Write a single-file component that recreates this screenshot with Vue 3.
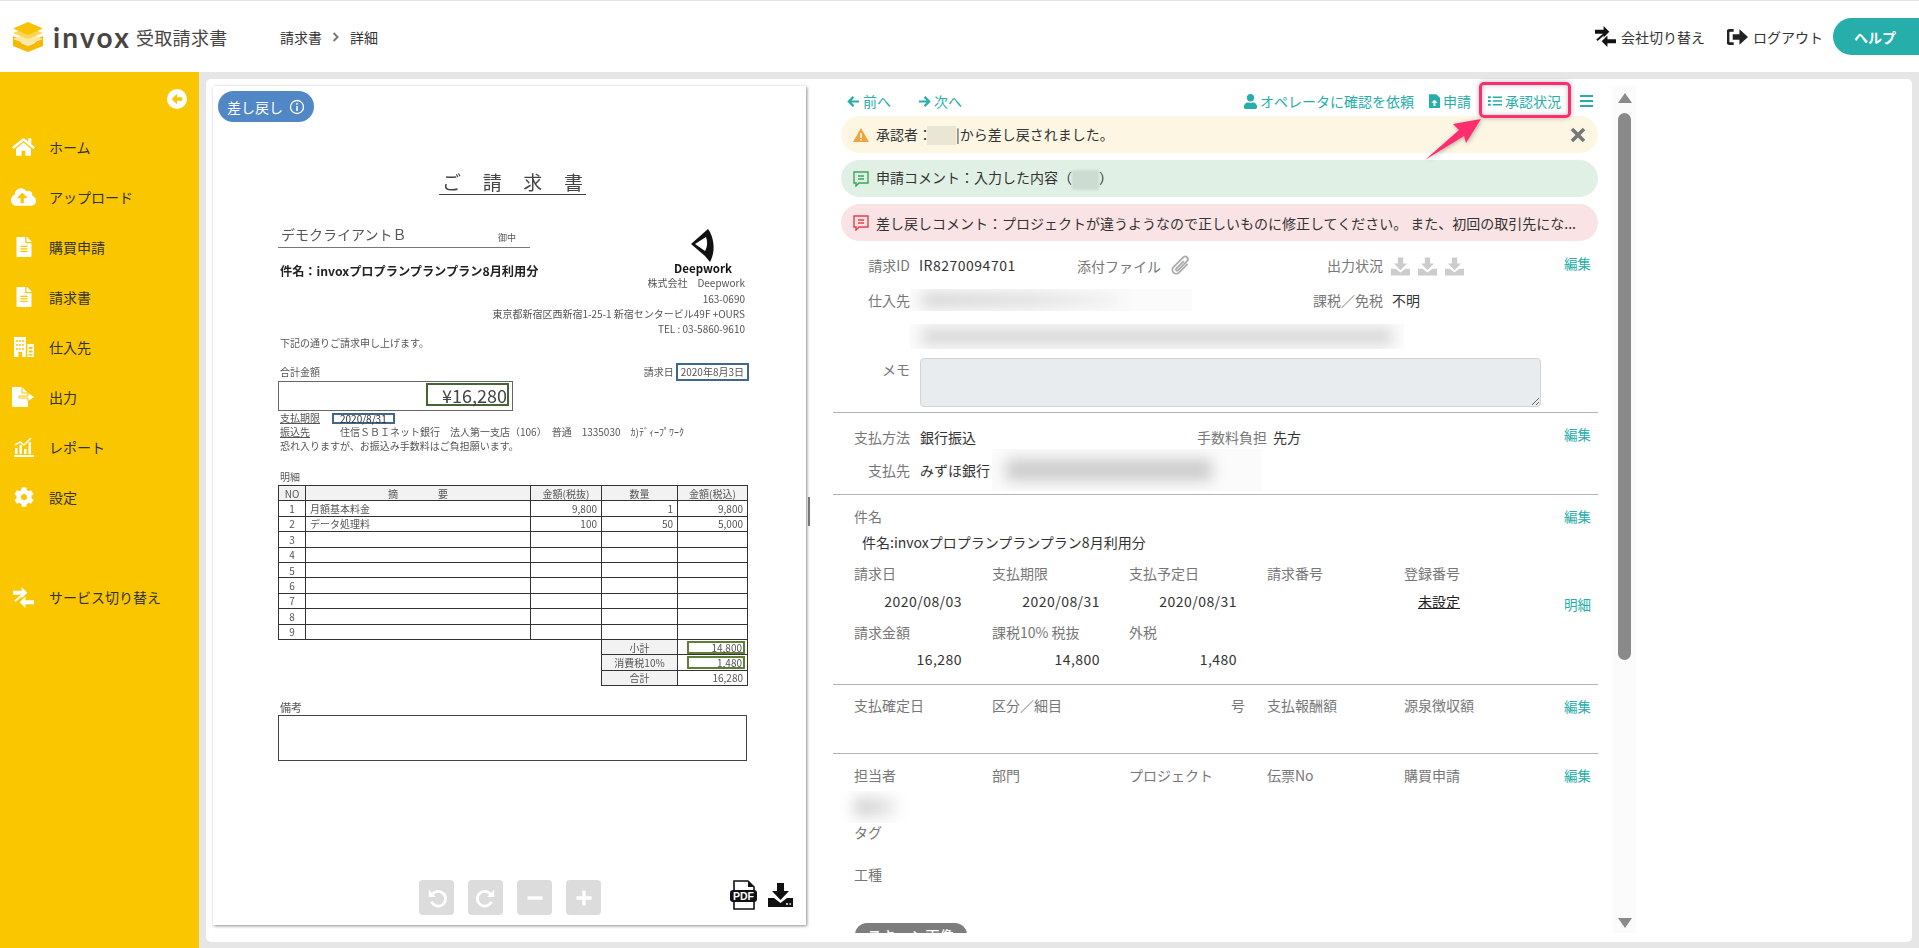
<script setup>
const tableRows = [
  { no: 1, name: '月額基本料金', price: '9,800', qty: '1', total: '9,800' },
  { no: 2, name: 'データ処理料', price: '100', qty: '50', total: '5,000' },
  { no: 3 }, { no: 4 }, { no: 5 }, { no: 6 }, { no: 7 }, { no: 8 }, { no: 9 }
]
const dateLabels = ['請求日', '支払期限', '支払予定日', '請求番号', '登録番号']
const dateValues = ['2020/08/03', '2020/08/31', '2020/08/31']
const amountLabels = ['請求金額', '課税10% 税抜', '外税']
const amountValues = ['16,280', '14,800', '1,480']
const payLabels = ['支払確定日', '区分／細目', '号', '支払報酬額', '源泉徴収額']
const staffLabels = ['担当者', '部門', 'プロジェクト', '伝票No', '購買申請']
</script>

<template>
  <div class="page">
    <header class="header">
      <div class="brand">
        <svg class="logo" viewBox="0 0 30 30" width="30" height="30">
          <polygon points="0,14 0,24 15,30 30,24 30,14 22,17.5 22,21 15,24 8,21 8,17.5" fill="#f7b900" />
          <polygon points="15,11 30,17 15,23 0,17" fill="#fde9a0" />
          <polygon points="15,5 30,11 15,17 0,11" fill="#fbd555" />
          <polygon points="15,0 30,6.5 15,13 0,6.5" fill="#f9c300" />
        </svg>
        <span class="brand-en">invox</span>
        <span class="brand-ja">受取請求書</span>
      </div>
      <div class="crumbs">
        <span>請求書</span>
        <svg viewBox="0 0 10 12" width="8" height="10"><path d="M2 1l5 5-5 5" fill="none" stroke="#777" stroke-width="2.4" /></svg>
        <span>詳細</span>
      </div>
      <div class="head-right">
        <a class="head-link">
          <svg viewBox="0 0 22 22" width="21" height="21"><path d="M0 4h9V0l6 6-6 6V8H0zM22 14h-9v-4l-6 6 6 6v-4h9z" fill="#111" /><path d="M2 15l8-7" stroke="#111" stroke-width="2" /></svg>
          会社切り替え
        </a>
        <a class="head-link logout">
          <svg viewBox="0 0 22 18" width="21" height="18"><path d="M7 2H3a2 2 0 0 0-2 2v10a2 2 0 0 0 2 2h4" fill="none" stroke="#222" stroke-width="3" /><path d="M6 6h7V1l9 8-9 8v-5H6z" fill="#222" /></svg>
          ログアウト
        </a>
        <button class="help">ヘルプ</button>
      </div>
    </header>

    <div class="main">
      <aside class="sidebar">
        <div class="toggle-wrap">
          <span class="toggle">
            <svg viewBox="0 0 16 16" width="14" height="14"><path d="M8 2L2 8l6 6v-4h6V6H8z" fill="#fac600" /></svg>
          </span>
        </div>
        <nav class="nav">
          <a class="nav-item">
            <span class="nav-icon"><svg viewBox="0 0 576 512" width="23" height="20"><path fill="#fff" d="M280.37 148.26L96 300.11V464a16 16 0 0 0 16 16l112.06-.29a16 16 0 0 0 15.92-16V368a16 16 0 0 1 16-16h64a16 16 0 0 1 16 16v95.64a16 16 0 0 0 16 16.05L464 480a16 16 0 0 0 16-16V300L295.67 148.26a12.19 12.19 0 0 0-15.3 0zM571.6 251.47L488 182.56V44.05a12 12 0 0 0-12-12h-56a12 12 0 0 0-12 12v72.61L318.47 43a48 48 0 0 0-61 0L4.34 251.47a12 12 0 0 0-1.6 16.9l25.5 31A12 12 0 0 0 45.15 301l235.22-193.74a12.19 12.19 0 0 1 15.3 0L530.9 301a12 12 0 0 0 16.9-1.6l25.5-31a12 12 0 0 0-1.7-16.93z" /></svg></span>
            ホーム
          </a>
          <a class="nav-item">
            <span class="nav-icon"><svg viewBox="0 0 640 512" width="25" height="20"><path fill="#fff" d="M537.6 226.6c4.1-10.7 6.4-22.4 6.4-34.6 0-53-43-96-96-96-19.7 0-38.1 6-53.3 16.2C367 64.2 315.3 32 256 32c-88.4 0-160 71.6-160 160 0 2.7.1 5.4.2 8.1C40.2 219.8 0 273.2 0 336c0 79.5 64.5 144 144 144h368c70.7 0 128-57.3 128-128 0-61.9-44-113.6-102.4-125.4zM393.4 288H328v112c0 8.8-7.2 16-16 16h-48c-8.8 0-16-7.2-16-16V288h-65.4c-14.3 0-21.4-17.2-11.3-27.3l105.4-105.4c6.2-6.2 16.4-6.2 22.6 0l105.4 105.4c10.1 10.1 2.9 27.3-11.3 27.3z" /></svg></span>
            アップロード
          </a>
          <a class="nav-item">
            <span class="nav-icon"><svg viewBox="0 0 384 512" width="16" height="20"><path fill="#fff" d="M224 136V0H24C10.7 0 0 10.7 0 24v464c0 13.3 10.7 24 24 24h336c13.3 0 24-10.7 24-24V160H248c-13.2 0-24-10.8-24-24zm64 236c0 6.6-5.4 12-12 12H108c-6.6 0-12-5.4-12-12v-8c0-6.6 5.4-12 12-12h168c6.6 0 12 5.4 12 12v8zm0-64c0 6.6-5.4 12-12 12H108c-6.6 0-12-5.4-12-12v-8c0-6.6 5.4-12 12-12h168c6.6 0 12 5.4 12 12v8zm0-72v8c0 6.6-5.4 12-12 12H108c-6.6 0-12-5.4-12-12v-8c0-6.6 5.4-12 12-12h168c6.6 0 12 5.4 12 12zm96-114.1v6.1H256V0h6.1c6.4 0 12.5 2.5 17 7l97.9 98c4.5 4.5 7 10.6 7 16.9z" /></svg></span>
            購買申請
          </a>
          <a class="nav-item">
            <span class="nav-icon"><svg viewBox="0 0 384 512" width="16" height="20"><path fill="#fff" d="M224 136V0H24C10.7 0 0 10.7 0 24v464c0 13.3 10.7 24 24 24h336c13.3 0 24-10.7 24-24V160H248c-13.2 0-24-10.8-24-24zm64 236c0 6.6-5.4 12-12 12H108c-6.6 0-12-5.4-12-12v-8c0-6.6 5.4-12 12-12h168c6.6 0 12 5.4 12 12v8zm0-64c0 6.6-5.4 12-12 12H108c-6.6 0-12-5.4-12-12v-8c0-6.6 5.4-12 12-12h168c6.6 0 12 5.4 12 12v8zm0-72v8c0 6.6-5.4 12-12 12H108c-6.6 0-12-5.4-12-12v-8c0-6.6 5.4-12 12-12h168c6.6 0 12 5.4 12 12zm96-114.1v6.1H256V0h6.1c6.4 0 12.5 2.5 17 7l97.9 98c4.5 4.5 7 10.6 7 16.9z" /></svg></span>
            請求書
          </a>
          <a class="nav-item">
            <span class="nav-icon"><svg viewBox="0 0 27 20" width="20" height="20" preserveAspectRatio="none"><path fill="#fff" fill-rule="evenodd" d="M0 0h16v20h-5v-5H6v5H0zM3 3v2h2V3zm4 0v2h2V3zm4 0v2h2V3zM3 7v2h2V7zm4 0v2h2V7zm4 0v2h2V7zM3 11v2h2v-2zm4 0v2h2v-2zm4 0v2h2v-2zM18 7h9v13h-9zm2 3v2h5v-2zm0 3.500v2h5v-2zm0 3.500v1.500h5V17z" /></svg></span>
            仕入先
          </a>
          <a class="nav-item">
            <span class="nav-icon"><svg viewBox="0 0 23 20" width="23" height="20"><path fill="#fff" d="M0 0h10l6 6v14H0z" /><path d="M10 0v6h6" fill="none" stroke="#fac600" stroke-width="1" /><path d="M7 9h9V5.500l7 4.500-7 4.500V11H7z" fill="#fff" stroke="#fac600" stroke-width="1" /></svg></span>
            出力
          </a>
          <a class="nav-item">
            <span class="nav-icon"><svg viewBox="0 0 20 20" width="20" height="20"><path fill="#fff" d="M0 18h20v2H0zM1 11h2.500v6H1zM5.500 8h2.500v9H5.500zM10 12h2.500v5H10zM14.500 5H17v12h-2.500z" /><path d="M1 8l5-3 4 3 7-7" fill="none" stroke="#fff" stroke-width="1.500" /></svg></span>
            レポート
          </a>
          <a class="nav-item">
            <span class="nav-icon"><svg viewBox="0 0 512 512" width="20" height="20"><path fill="#fff" d="M487.4 315.7l-42.6-24.6c4.3-23.2 4.3-47 0-70.2l42.6-24.6c4.9-2.8 7.1-8.6 5.5-14-11.1-35.6-30-67.8-54.7-94.6-3.8-4.1-10-5.1-14.8-2.3L380.8 110c-17.9-15.4-38.5-27.3-60.8-35.1V25.8c0-5.6-3.9-10.5-9.4-11.7-36.7-8.2-74.3-7.8-109.2 0-5.5 1.2-9.4 6.1-9.4 11.7V75c-22.2 7.9-42.8 19.8-60.8 35.1L88.7 85.5c-4.9-2.8-11-1.9-14.8 2.3-24.7 26.7-43.6 58.9-54.7 94.6-1.7 5.4.6 11.2 5.5 14L67.3 221c-4.3 23.2-4.3 47 0 70.2l-42.6 24.6c-4.9 2.8-7.1 8.6-5.5 14 11.1 35.6 30 67.8 54.7 94.6 3.8 4.1 10 5.1 14.8 2.3l42.6-24.6c17.9 15.4 38.5 27.3 60.8 35.1v49.2c0 5.6 3.9 10.5 9.4 11.7 36.7 8.2 74.3 7.8 109.2 0 5.5-1.2 9.4-6.1 9.4-11.7v-49.2c22.2-7.9 42.8-19.8 60.8-35.1l42.6 24.6c4.9 2.8 11 1.9 14.8-2.3 24.7-26.7 43.6-58.9 54.7-94.6 1.5-5.5-.7-11.3-5.6-14.1zM256 336c-44.1 0-80-35.9-80-80s35.9-80 80-80 80 35.9 80 80-35.9 80-80 80z" /></svg></span>
            設定
          </a>
          <a class="nav-item service">
            <span class="nav-icon"><svg viewBox="0 0 22 22" width="21" height="21"><path d="M0 4h9V0l6 6-6 6V8H0zM22 14h-9v-4l-6 6 6 6v-4h9z" fill="#fff" /><path d="M2 15l8-7" stroke="#fff" stroke-width="2" /></svg></span>
            サービス切り替え
          </a>
        </nav>
      </aside>

      <div class="content">
        <div class="card">
          <section class="viewer">
            <span class="status-pill">
              差し戻し
              <svg viewBox="0 0 16 16" width="16" height="16"><circle cx="8" cy="8" r="6.500" fill="none" stroke="#fff" stroke-width="1.300" /><path d="M8 7v5M8 4v1.800" stroke="#fff" stroke-width="1.500" /></svg>
            </span>

            <div class="doc">
              <h1 class="doc-title"><span>ご</span><span>請</span><span>求</span><span>書</span></h1>

              <div class="doc-top">
                <div class="doc-left">
                  <div class="client"><span>デモクライアントＢ</span><small>御中</small></div>
                  <div class="subject">件名：invoxプロプランプランプラン8月利用分</div>
                </div>
                <div class="doc-right">
                  <svg viewBox="0 0 24 33" width="24" height="33"><path fill="#111" fill-rule="evenodd" d="M17 0C23 8 25 22 19 33L14 27 0 15zM4 15l10 7c2-3 3-9 1-14z" /></svg>
                  <strong>Deepwork</strong>
                  <span>株式会社　Deepwork</span>
                </div>
              </div>
              <div class="doc-address">
                <div>163-0690</div>
                <div>東京都新宿区西新宿1-25-1 新宿センタービル49F +OURS</div>
                <div>TEL : 03-5860-9610</div>
              </div>
              <div class="doc-line">下記の通りご請求申し上げます。</div>

              <div class="doc-total-head">
                <span>合計金額</span>
                <span class="bill-date">請求日 <b class="mark-blue">2020年8月3日</b></span>
              </div>
              <div class="total-box"><span class="total-mark">¥16,280</span></div>
              <div class="doc-line due"><u>支払期限</u><b class="mark-blue small">2020/8/31</b></div>
              <div class="doc-line bank"><u>振込先</u><span>住信ＳＢＩネット銀行　法人第一支店（106）　普通　1335030　ｶ)ﾃﾞｨｰﾌﾟﾜｰｸ</span></div>
              <div class="doc-line">恐れ入りますが、お振込み手数料はご負担願います。</div>

              <div class="doc-line meisai">明細</div>
              <table class="lines">
                <colgroup><col class="w1"><col class="w2"><col class="w3"><col class="w4"><col class="w5"></colgroup>
                <thead>
                  <tr><th>NO</th><th>摘　　　　要</th><th>金額(税抜)</th><th>数量</th><th>金額(税込)</th></tr>
                </thead>
                <tbody>
                  <tr v-for="row in tableRows" :key="row.no">
                    <td class="c">{{ row.no }}</td>
                    <td>{{ row.name }}</td>
                    <td class="r">{{ row.price }}</td>
                    <td class="r">{{ row.qty }}</td>
                    <td class="r">{{ row.total }}</td>
                  </tr>
                  <tr class="sum"><td colspan="3" class="blank"></td><th>小計</th><td class="r"><span class="mark-green">14,800</span></td></tr>
                  <tr class="sum"><td colspan="3" class="blank none"></td><th>消費税10%</th><td class="r"><span class="mark-green">1,480</span></td></tr>
                  <tr class="sum"><td colspan="3" class="blank none"></td><th>合計</th><td class="r plain">16,280</td></tr>
                </tbody>
              </table>
              <div class="doc-line bikou">備考</div>
              <div class="remark-box"></div>
            </div>

            <div class="viewer-tools">
              <div class="tool-group">
                <button class="tool"><svg viewBox="0 0 24 24" width="22" height="22"><path d="M7 8a8 8 0 1 1-1 8" fill="none" stroke="#fff" stroke-width="3" /><path d="M3 3v8h8z" fill="#fff" /></svg></button>
                <button class="tool"><svg viewBox="0 0 24 24" width="22" height="22"><path d="M17 8a8 8 0 1 0 1 8" fill="none" stroke="#fff" stroke-width="3" /><path d="M21 3v8h-8z" fill="#fff" /></svg></button>
                <button class="tool"><svg viewBox="0 0 24 24" width="20" height="20"><path d="M3 12h18" stroke="#fff" stroke-width="4" /></svg></button>
                <button class="tool"><svg viewBox="0 0 24 24" width="20" height="20"><path d="M3 12h18M12 3v18" stroke="#fff" stroke-width="4" /></svg></button>
              </div>
              <div class="file-group">
                <span class="pdf">
                  <svg viewBox="0 0 27 30" width="27" height="30"><path d="M4 1h14l6 6v22H4z" fill="#fff" stroke="#111" stroke-width="1.600" /><path d="M18 1v6h6z" fill="#111" /><rect x="0" y="10" width="27" height="12" rx="3" fill="#111" /></svg>
                  <em>PDF</em>
                </span>
                <svg viewBox="0 0 25 24" width="25" height="24"><path d="M9 0h7v8h5l-8.500 9L4 8h5z" fill="#111" /><path d="M0 15h6l6.500 5 6.500-5h6v9H0z" fill="#111" /><path d="M18 21h2M21.500 21h1.500" stroke="#fff" stroke-width="1.500" /></svg>
              </div>
            </div>
          </section>

          <div class="splitter"><span></span></div>

          <section class="detail">
            <div class="action-bar">
              <div class="pager">
                <a><svg viewBox="0 0 14 14" width="13" height="13"><path d="M13 7H2M7 2L2 7l5 5" fill="none" stroke="#26aeaa" stroke-width="2.400" /></svg>前へ</a>
                <a><svg viewBox="0 0 14 14" width="13" height="13"><path d="M1 7h11M7 2l5 5-5 5" fill="none" stroke="#26aeaa" stroke-width="2.400" /></svg>次へ</a>
              </div>
              <div class="actions">
                <a class="a-op"><svg viewBox="0 0 448 512" width="13" height="15"><path fill="#26aeaa" d="M224 256c70.700 0 128-57.300 128-128S294.700 0 224 0 96 57.300 96 128s57.300 128 128 128zm89.600 32h-16.700c-22.200 10.200-46.900 16-72.900 16s-50.600-5.800-72.900-16h-16.700C60.200 288 0 348.200 0 422.400V464c0 26.500 21.500 48 48 48h352c26.500 0 48-21.500 48-48v-41.600c0-74.200-60.200-134.400-134.400-134.400z" /></svg>オペレータに確認を依頼</a>
                <a class="a-apply"><svg viewBox="0 0 12 15" width="11" height="14"><path fill="#26aeaa" fill-rule="evenodd" d="M0 0h8l4 4v11H0zM6 6L2.500 9.500H5V13h2V9.500h2.500z" /></svg>申請</a>
                <a class="a-status"><svg viewBox="0 0 15 12" width="14" height="12"><path d="M0 1h3v2H0zM0 5h3v2H0zM0 9h3v2H0zM5 1.200h10v1.600H5zM5 5.200h10v1.600H5zM5 9.200h10v1.600H5z" fill="#26aeaa" /></svg>承認状況</a>
                <a class="a-menu"><svg viewBox="0 0 13 12" width="13" height="12"><path d="M0 1h13M0 6h13M0 11h13" stroke="#26aeaa" stroke-width="1.800" /></svg></a>
              </div>
            </div>

            <div class="alert a-yellow">
              <svg viewBox="0 0 16 14" width="16" height="14"><path d="M8 0l8 14H0z" fill="#f0a43a" /><path d="M8 5v5M8 11v1.500" stroke="#fff" stroke-width="1.500" /></svg>
              <span>承認者：<i class="mask yellow"></i>|から差し戻されました。</span>
              <svg class="close" viewBox="0 0 16 16" width="16" height="16"><path d="M2 2l12 12M14 2L2 14" stroke="#777" stroke-width="3.600" /></svg>
            </div>
            <div class="alert a-green">
              <svg viewBox="0 0 16 16" width="16" height="16"><path d="M1 1h14v11H6l-3 3v-3H1z" fill="none" stroke="#3aa657" stroke-width="1.400" /><path d="M5 5h6M5 8h6" stroke="#3aa657" stroke-width="1.300" /></svg>
              <span>申請コメント：入力した内容（<i class="mask green"></i>）</span>
            </div>
            <div class="alert a-red">
              <svg viewBox="0 0 16 16" width="16" height="16"><path d="M1 1h14v11H6l-3 3v-3H1z" fill="none" stroke="#e3404f" stroke-width="1.400" /><path d="M5 5h6M5 8h6" stroke="#e3404f" stroke-width="1.300" /></svg>
              <span>差し戻しコメント：プロジェクトが違うようなので正しいものに修正してください。 また、初回の取引先にな...</span>
            </div>

            <div class="sec sec-a">
              <div class="sec-body">
                <div class="info-grid">
                  <span class="lbl r-lbl">請求ID</span>
                  <span class="val id-val">IR8270094701</span>
                  <span class="mid">
                    <span class="lbl attach">添付ファイル
                      <svg viewBox="0 0 20 22" width="22" height="24"><path d="M17 9l-8 8a3.500 3.500 0 0 1-5-5l9-9a2.400 2.400 0 0 1 3.500 3.500l-8.500 8.500a1 1 0 0 1-1.500-1.500l7-7" fill="none" stroke="#aaa" stroke-width="1.600" /></svg>
                    </span>
                    <span class="lbl">出力状況</span>
                  </span>
                  <span class="out">
                    <svg v-for="i in 3" :key="i" viewBox="0 0 25 24" width="19" height="19"><path d="M9 0h7v8h5l-8.500 9L4 8h5z" fill="#ccc" /><path d="M0 15h6l6.500 5 6.500-5h6v9H0z" fill="#ccc" /></svg>
                  </span>
                </div>
                <div class="info-grid second">
                  <span class="lbl r-lbl">仕入先</span>
                  <span class="blur-box b-vendor"><i></i></span>
                  <span class="lbl r-lbl tax-lbl">課税／免税</span>
                  <span class="val tax-val">不明</span>
                </div>
                <div class="blur-box b-address"><i></i></div>
                <div class="memo-row">
                  <span class="lbl r-lbl memo-lbl">メモ</span>
                  <textarea class="memo" disabled></textarea>
                </div>
              </div>
              <a class="edit edit-a">編集</a>
            </div>

            <div class="sec sec-b">
              <div class="sec-body">
                <div class="pay-row">
                  <span class="lbl pay-lbl">支払方法</span>
                  <span class="val pay-val">銀行振込</span>
                  <span class="lbl fee-lbl">手数料負担</span>
                  <span class="val fee-val">先方</span>
                </div>
                <div class="pay-row next">
                  <span class="lbl pay-lbl">支払先</span>
                  <span class="val pay-val">みずほ銀行</span>
                  <span class="blur-box b-bank"><i></i></span>
                </div>
              </div>
              <a class="edit edit-b">編集</a>
            </div>

            <div class="sec sec-c">
              <div class="sec-body cols">
                <div class="lbl">件名</div>
                <div class="val subject-val">件名:invoxプロプランプランプラン8月利用分</div>
                <div class="five row-a">
                  <span v-for="l in dateLabels" :key="l" class="lbl">{{ l }}</span>
                </div>
                <div class="five row-b first">
                  <span v-for="(v, i) in dateValues" :key="i" class="val num">{{ v }}</span>
                  <span></span>
                  <span class="val unset"><u>未設定</u></span>
                </div>
                <div class="five row-c">
                  <span v-for="l in amountLabels" :key="l" class="lbl">{{ l }}</span>
                </div>
                <div class="five row-b">
                  <span v-for="v in amountValues" :key="v" class="val num">{{ v }}</span>
                </div>
              </div>
              <div class="edit-col">
                <a class="edit">編集</a>
                <a class="edit detail-link">明細</a>
              </div>
            </div>

            <div class="sec sec-d">
              <div class="sec-body cols">
                <div class="five">
                  <span v-for="(l, i) in payLabels" :key="i" class="lbl" :class="{ gou: i === 2 }">{{ l }}</span>
                </div>
              </div>
              <a class="edit">編集</a>
            </div>

            <div class="sec sec-e">
              <div class="sec-body cols">
                <div class="five">
                  <span v-for="l in staffLabels" :key="l" class="lbl">{{ l }}</span>
                </div>
                <div class="blur-box b-staff"><i></i></div>
                <div class="lbl tag">タグ</div>
                <div class="lbl kind">工種</div>
                <div class="scan-pill">スキャン画像</div>
              </div>
              <a class="edit">編集</a>
            </div>
          </section>

          <div class="scrollbar">
            <span class="sb-up"></span>
            <span class="sb-thumb"></span>
            <span class="sb-down"></span>
          </div>
        </div>
      </div>
    </div>

    <!-- 赤い注釈 -->
    <div class="note-box"></div>
    <svg class="note-arrow" viewBox="0 0 60 44" width="60" height="44">
      <polygon points="57,0 29,5 35,11 1,41 40,17 42,24" fill="#ff2d6f" />
    </svg>
  </div>
</template>

<style>
html, body { margin: 0; padding: 0; overflow: hidden; }
</style>

<style scoped>
.page { position: relative; width: 1919px; height: 948px; display: flex; flex-direction: column; overflow: hidden; background: #e6e6e6; font-family: "Noto Sans CJK JP", "Noto Sans", sans-serif; font-size: 14px; color: #333; }
a { cursor: pointer; }

.header { height: 71px; flex: none; display: flex; align-items: center; background: #fff; border-top: 1px solid #e2e2e2; }
.brand { display: flex; align-items: center; width: 280px; padding-left: 13px; box-sizing: border-box; }
.logo { flex: none; }
.brand-en { margin-left: 10px; font-family: Lato, "Noto Sans", sans-serif; font-size: 28px; font-weight: 700; letter-spacing: 2.200px; color: #4a4545; line-height: 1; }
.brand-ja { margin-left: 5px; font-size: 18px; letter-spacing: .3px; color: #4a4545; }
.crumbs { display: flex; align-items: center; gap: 10px; color: #333; }
.head-right { margin-left: auto; display: flex; align-items: center; }
.head-link { display: flex; align-items: center; gap: 5px; color: #333; }
.logout { margin-left: 22px; }
.help { width: 86px; height: 37px; margin-left: 10px; border: 0; border-radius: 19px 0 0 19px; background: #26aeaa; color: #fff; font: 700 14px "Noto Sans CJK JP", sans-serif; padding-right: 8px; }

.main { flex: 1; display: flex; min-height: 0; }
.sidebar { width: 199px; flex: none; background: #fac600; }
.toggle-wrap { height: 50px; display: flex; justify-content: flex-end; align-items: flex-start; padding: 17px 12px 0 0; box-sizing: border-box; }
.toggle { width: 20px; height: 20px; border-radius: 50%; background: #fff; display: flex; align-items: center; justify-content: center; }
.nav { display: flex; flex-direction: column; }
.nav-item { height: 50px; display: flex; align-items: center; color: #333; }
.nav-icon { width: 49px; box-sizing: border-box; display: flex; justify-content: center; padding-right: 2px; }
.service { margin-top: 50px; }

.content { flex: 1; min-width: 0; padding: 7px 7px 6px 7px; box-sizing: border-box; }
.card { height: 100%; background: #fff; border-radius: 5px; display: flex; padding: 7px 0 9px 7px; box-sizing: border-box; }

.viewer { position: relative; width: 593px; height: 839px; flex: none; display: flex; flex-direction: column; box-shadow: 1px 1px 3px rgba(0,0,0,.45); }
.status-pill { position: absolute; left: 5px; top: 5px; width: 96px; height: 31px; box-sizing: border-box; border-radius: 16px; background: #5087c4; color: #fff; display: flex; align-items: center; justify-content: center; gap: 6px; }

.doc { margin: 84px 0 0 65px; width: 469px; color: #555; font-size: 10px; line-height: 14px; filter: blur(.3px); }
.doc-title { width: 147px; height: 25px; margin: 0 auto; display: flex; justify-content: space-between; padding: 0 3px; box-sizing: border-box; border-bottom: 1.500px solid #444; font-size: 19px; font-weight: 400; line-height: 24px; color: #444; }
.doc-top { display: flex; justify-content: space-between; height: 96px; }
.doc-left { width: 300px; padding-top: 30px; }
.client { width: 252px; height: 23px; box-sizing: border-box; border-bottom: 1.500px solid #777; display: flex; justify-content: space-between; font-size: 14px; line-height: 19px; padding: 0 14px 0 3px; }
.client small { font-size: 9px; padding-top: 3px; }
.subject { margin-top: 16px; padding-left: 2px; font-size: 12.200px; font-weight: 700; color: #222; white-space: nowrap; }
.doc-right { display: flex; flex-direction: column; align-items: flex-end; padding: 34px 2px 0 0; }
.doc-right svg { margin-right: 30px; }
.doc-right strong { color: #111; font-size: 11.500px; line-height: 13px; margin-top: 0; margin-right: 13px; }
.doc-right span { line-height: 15px; }
.doc-address { text-align: right; padding-right: 2px; line-height: 15px; }
.doc-line { padding-left: 2px; line-height: 14px; white-space: nowrap; }
.doc-total-head { display: flex; justify-content: space-between; align-items: center; height: 19px; margin-top: 12px; padding-left: 2px; }
.bill-date { display: flex; align-items: center; gap: 2px; margin-right: -2px; }
.mark-blue { font-weight: 400; border: 2px solid #3e688d; padding: 0 3px; line-height: 14px; }
.mark-blue.small { line-height: 7px; margin-left: 12px; padding: 0 6px; color: #333; }
.total-box { width: 235px; height: 30px; box-sizing: border-box; border: 1.500px solid #666; display: flex; justify-content: flex-end; padding: 1px 3px 0 0; }
.total-mark { width: 83px; height: 23px; box-sizing: border-box; border: 2px solid #4a6332; text-align: right; font-size: 18px; line-height: 20px; color: #444; }
.due { margin-top: 1px; height: 12px; display: flex; align-items: center; }
.bank { margin-top: 1px; }
.bank span { margin-left: 30px; }
.meisai { margin-top: 17px; height: 15px; }
.lines { width: 469px; table-layout: fixed; border-collapse: collapse; }
.w1 { width: 27px; }
.w2 { width: 225px; }
.w3 { width: 71px; }
.w4 { width: 76px; }
.w5 { width: 70px; }
.lines th, .lines td { height: 14.400px; padding: 0 4px; border: 1.300px solid #333; line-height: 13px; font-weight: 400; white-space: nowrap; }
.lines th { background: #f2f2f2; text-align: center; padding: 0; }
.lines .c { text-align: center; padding: 0; }
.lines .r { text-align: right; }
.lines .blank { border: 0; border-top: 1.300px solid #333; }
.lines .blank.none { border-top: 0; }
.lines .sum td.r { padding: 0 2px 0 0; }
.lines .sum td.plain { padding-right: 4px; }
.mark-green { display: block; border: 2px solid #5f7f36; line-height: 9px; padding-right: 1px; margin-left: 9px; }
.bikou { margin-top: 14px; height: 15px; font-size: 11px; }
.remark-box { height: 46px; border: 1.500px solid #444; box-sizing: border-box; }

.viewer-tools { margin-top: auto; height: 45px; padding: 0 13px 0 206px; display: flex; justify-content: space-between; align-items: flex-start; }
.tool-group { display: flex; gap: 14px; }
.tool { width: 35px; height: 35px; border: 0; padding: 0; border-radius: 4px; background: #dcdcdc; display: flex; align-items: center; justify-content: center; }
.file-group { display: flex; gap: 11px; align-items: center; }
.pdf { position: relative; display: block; width: 27px; height: 30px; }
.pdf em { position: absolute; left: 0; right: 0; top: 9px; text-align: center; color: #fff; font: 700 10.500px/14px "Liberation Sans", sans-serif; }

.splitter { width: 27px; flex: none; position: relative; }
.splitter span { position: absolute; left: 2px; top: 411px; width: 2px; height: 29px; background: #777; }

.detail { width: 765px; flex: none; overflow: hidden; }
.action-bar { height: 30px; display: flex; justify-content: space-between; align-items: center; padding: 0 5px 0 14px; color: #26aeaa; }
.action-bar a { display: flex; align-items: center; gap: 3px; color: #26aeaa; }
.pager { display: flex; gap: 27px; }
.actions { display: flex; align-items: center; }
.a-apply { margin-left: 15px; }
.a-status { margin-left: 17px; }
.a-menu { margin-left: 19px; }

.alert { width: 757px; height: 37px; box-sizing: border-box; margin: 0 0 7px 8px; padding: 0 12px 0 12px; border-radius: 19px; display: flex; align-items: center; gap: 7px; font-size: 14px; color: #333; white-space: nowrap; }
.a-yellow { background: #fdf6e3; }
.a-green { background: #e1f0e4; }
.a-red { background: #f9e3e5; margin-bottom: 0; }
.close { margin-left: auto; }
.mask { display: inline-block; vertical-align: middle; }
.mask.yellow { width: 29px; height: 19px; margin-left: -5px; background: #e9e6d6; }
.mask.green { width: 27px; height: 20px; background: #ccdcd2; filter: blur(1px); }

.sec { display: flex; padding-right: 6px; border-bottom: 1px solid #b4b4b4; box-sizing: border-box; }
.sec-body { flex: 1; min-width: 0; }
.edit { display: block; width: 28px; flex: none; margin-top: 11px; color: #26aeaa; line-height: 20px; font-size: 13.500px; white-space: nowrap; }
.edit-a { margin-top: 10px; }
.edit-b { margin-top: 9px; }
.edit-col { width: 28px; flex: none; }
.detail-link { margin-top: 68px; }
.lbl { color: #777; line-height: 22px; white-space: nowrap; }
.val { color: #333; line-height: 22px; white-space: nowrap; }

.sec-a { height: 172px; padding-top: 2px; }
.info-grid { display: grid; grid-template-columns: 77px 167px 306px 1fr; margin-top: 11px; }
.info-grid.second { margin-top: 11px; }
.r-lbl { text-align: right; }
.info-grid .val { padding-left: 9px; }
.id-val { letter-spacing: .5px; }
.mid { display: flex; justify-content: space-between; }
.attach { display: flex; align-items: center; gap: 8px; }
.out { display: flex; gap: 8px; padding-left: 8px; align-items: center; }
.tax-lbl { grid-column: 3; }
.tax-val { grid-column: 4; }
.blur-box { display: block; position: relative; overflow: hidden; background: #fbfbfb; }
.blur-box i { position: absolute; inset: 4px 12px; background: linear-gradient(90deg, #d2d2d2, #dedede 55%, #f4f4f4); filter: blur(7px); }
.b-vendor { width: 282px; height: 22px; }
.b-vendor i { right: 70px; }
.b-address { width: 494px; height: 25px; margin: 13px 0 0 77px; }
.b-address i { background: #d8d8d8; }
.memo-row { display: flex; margin-top: 9px; }
.memo-lbl { width: 77px; flex: none; }
.memo { width: 621px; height: 49px; margin: 0 0 0 10px; box-sizing: border-box; border: 1px solid #ced4da; border-radius: 4px; background: #e9ecef; padding: 0; }

.sec-b { height: 82px; padding-top: 2px; }
.pay-row { display: flex; margin-top: 11px; align-items: center; }
.pay-lbl { width: 77px; text-align: right; flex: none; }
.pay-val { margin-left: 10px; }
.fee-lbl { margin-left: 0; width: 291px; text-align: right; }
.fee-val { margin-left: 6px; }
.b-bank { width: 270px; height: 42px; margin: -10px 0 -10px 2px; }
.b-bank i { inset: 10px 50px 10px 14px; background: #cdcdcd; }

.sec-c { height: 190px; }
.cols { padding-left: 21px; }
.sec-c .cols { padding-top: 10px; }
.subject-val { margin: 4px 0 0 8px; }
.five { display: grid; grid-template-columns: 138px 137px 138px 137px 1fr; }
.row-a { margin-top: 9px; }
.row-b { margin-top: 5px; height: 22px; }
.row-b.first { margin-top: 6px; }
.row-c { margin-top: 9px; }
.num { width: 108px; text-align: right; letter-spacing: .45px; }
.unset { padding-left: 14px; color: #222; }
.gou { text-align: right; padding-right: 22px; }

.sec-d { height: 69px; }
.sec-d .cols { padding-top: 9px; }
.sec-e { display: flex; border-bottom: 0; }
.sec-e .cols { padding-top: 10px; }
.b-staff { width: 72px; height: 32px; margin: 5px 0 0 -14px; background: transparent; }
.b-staff i { inset: 6px 14px; }
.tag { margin-top: -2px; }
.kind { margin-top: 20px; }
.scan-pill { width: 112px; height: 24px; margin: 38px 0 0 1px; border-radius: 12px; background: #7d7d7d; color: #fff; text-align: center; font-weight: 500; line-height: 24px; letter-spacing: .5px; }

.scrollbar { position: relative; width: 23px; flex: none; margin-left: 15px; background: #fbfbfb; display: flex; flex-direction: column; align-items: center; }
.sb-up { width: 0; height: 0; margin-top: 7px; border: 7.500px solid transparent; border-top: 0; border-bottom: 10px solid #8a8a8a; }
.sb-thumb { width: 13px; height: 547px; margin-top: 10px; border-radius: 7px; background: #8a8a8a; }
.sb-down { width: 0; height: 0; margin-top: 258px; border: 7.500px solid transparent; border-bottom: 0; border-top: 10px solid #8a8a8a; }

.note-box { position: absolute; left: 1479px; top: 82px; width: 92px; height: 36px; box-sizing: border-box; border: 3px solid #ff2d6f; border-radius: 5px; box-shadow: 0 0 5px rgba(0,0,0,.3), inset 0 0 5px rgba(0,0,0,.25); }
.note-arrow { position: absolute; left: 1424px; top: 119px; filter: drop-shadow(1px 1px 2px rgba(0,0,0,.3)); }
</style>
